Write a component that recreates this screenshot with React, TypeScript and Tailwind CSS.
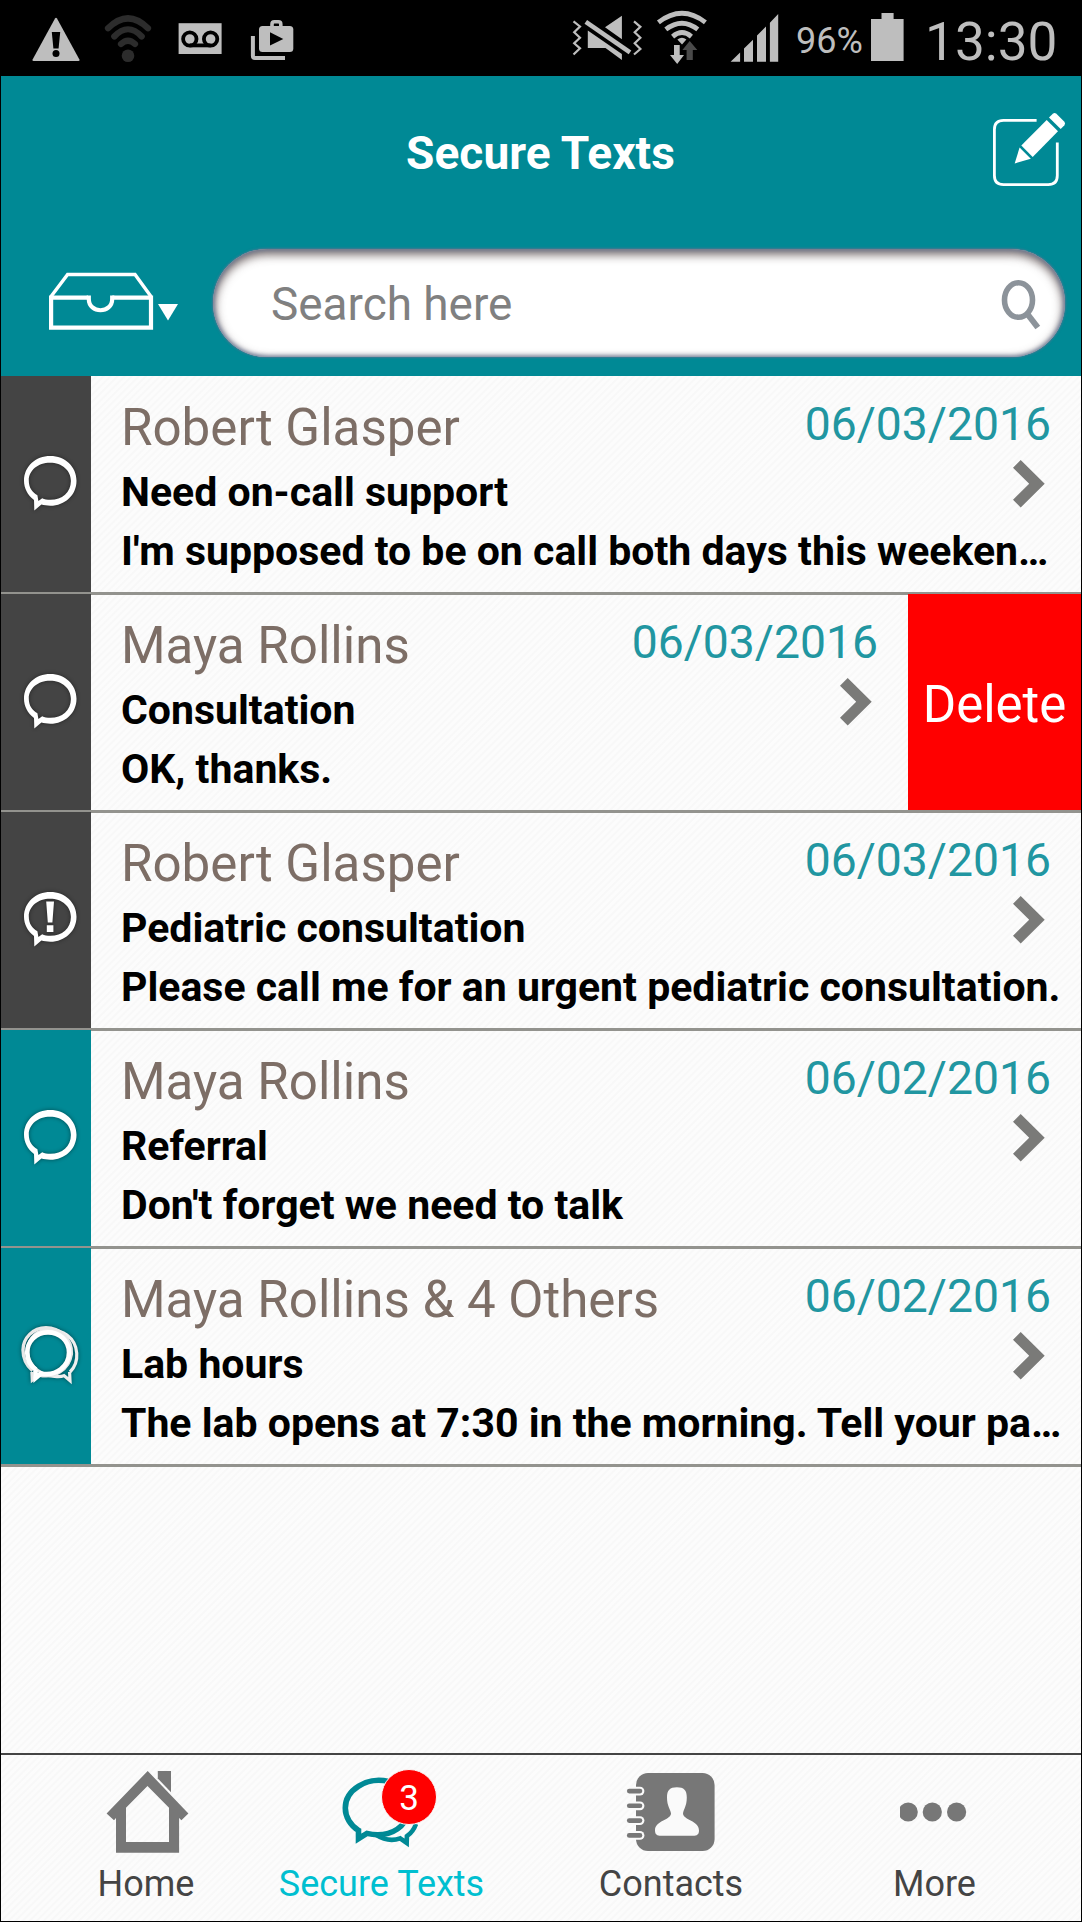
import React from 'react';
import clsx from 'clsx';

type ThreadKind = 'single' | 'urgent' | 'group';

interface Thread {
  id: number;
  name: string;
  date: string;
  subject: string;
  preview: string;
  kind: ThreadKind;
  unread?: boolean;
  swiped?: boolean;
}

const threads: Thread[] = [
  { id: 1, name: 'Robert Glasper', date: '06/03/2016', subject: 'Need on-call support', preview: "I'm supposed to be on call both days this weeken…", kind: 'single' },
  { id: 2, name: 'Maya Rollins', date: '06/03/2016', subject: 'Consultation', preview: 'OK, thanks.', kind: 'single', swiped: true },
  { id: 3, name: 'Robert Glasper', date: '06/03/2016', subject: 'Pediatric consultation', preview: 'Please call me for an urgent pediatric consultation.', kind: 'urgent' },
  { id: 4, name: 'Maya Rollins', date: '06/02/2016', subject: 'Referral', preview: "Don't forget we need to talk", kind: 'single', unread: true },
  { id: 5, name: 'Maya Rollins & 4 Others', date: '06/02/2016', subject: 'Lab hours', preview: 'The lab opens at 7:30 in the morning. Tell your pa…', kind: 'group', unread: true },
];

const StatusBar: React.FC = () => (
  <div className="flex h-[76px] shrink-0 items-start bg-black text-[#bebebe]">
    {/* warning */}
    <svg className="ml-[31px] h-[76px] w-[48px]" viewBox="32 0 48 76">
      <path d="M55 18.6Q56 17 57 18.6L79.4 59.4Q80 61 78.4 61H33.6Q32 61 32.6 59.4Z" fill="#bebebe" />
      <path d="M51.8 32H60.2L58.6 48.6H53.4Z" fill="#000" />
      <circle cx="56" cy="53.4" r="3.5" fill="#000" />
    </svg>
    {/* wifi, no connection */}
    <svg className="ml-[24px] h-[76px] w-[48px]" viewBox="104 0 48 76" fill="none" stroke="#2c2c2c" strokeWidth="6.2" strokeLinecap="round">
      <path d="M108 28.3Q128 8.5 148 28.3" />
      <path d="M114.3 36.5Q128 22 141.7 36.5" />
      <path d="M121 44Q128 37.5 135 44" />
      <circle cx="128" cy="55.8" r="6.3" fill="#2c2c2c" stroke="none" />
    </svg>
    {/* voicemail */}
    <svg className="ml-[26px] h-[76px] w-[44px]" viewBox="178 0 44 76">
      <rect x="178.6" y="23.2" width="43" height="30.8" fill="#bebebe" />
      <g fill="none" stroke="#000" strokeWidth="3.8">
        <circle cx="189.8" cy="39" r="6.7" />
        <circle cx="210.6" cy="39" r="6.7" />
        <path d="M189.8 45.4H210.6" />
      </g>
    </svg>
    {/* play store */}
    <svg className="ml-[28px] h-[76px] w-[44px]" viewBox="250 0 44 76">
      <path d="M252.9 36V56Q252.9 58 255 58H285" fill="none" stroke="#bebebe" strokeWidth="4" />
      <path d="M272 27V24.2Q272 21.8 274.4 21.8H278.4Q280.8 21.8 280.8 24.2V27" fill="none" stroke="#bebebe" strokeWidth="3.6" />
      <rect x="259" y="26" width="34.3" height="26" rx="3.5" fill="#bebebe" />
      <path d="M270 32.3L283.3 38.9L270 45.5Z" fill="#000" />
    </svg>

    {/* vibrate + muted */}
    <svg className="ml-[278px] h-[76px] w-[72px]" viewBox="572 0 72 76">
      <g fill="none" stroke="#bebebe" strokeWidth="2.2">
        <path d="M573.5 21.3L580 26.5L574.2 32.3L580 37.7L574.2 43.3L580 48.3L573.5 54.5" />
        <path d="M634 21.3L640.4 26.8L634.7 32.3L640.4 37.7L634.7 43.3L640.4 49L634 54.5" />
      </g>
      <path d="M585.8 21.8L630 52.4" stroke="#bebebe" strokeWidth="4.6" />
      <path d="M621.9 15.7V39.3L605 27.2ZM587.8 30.6L621.9 54V60L605.5 48H587.8Z" fill="#bebebe" />
    </svg>
    {/* wifi with traffic arrows */}
    <svg className="ml-[12px] h-[76px] w-[52px]" viewBox="656 0 52 76">
      <g fill="none" stroke="#bebebe" strokeWidth="4.8">
        <path d="M658.4 22.4Q682 4.2 705.4 22.4" />
        <path d="M665.8 29.4Q682 17 697.8 29.4" />
        <path d="M672.6 36.6Q682 28.6 691.4 36.6" />
      </g>
      <path d="M677.4 39.5Q682 36 686.4 39.5L682 44.6Z" fill="#bebebe" />
      <path d="M674 45H679.7V55H684L677.2 64L670 55H674Z" fill="#bebebe" />
      <path d="M689.7 41L697.3 50H692.8V60H686.6V50H682.4Z" fill="#4a4a4a" />
    </svg>
    {/* signal strength */}
    <svg className="ml-[22px] h-[76px] w-[50px]" viewBox="730 0 50 76" fill="#bebebe">
      <path d="M730.6 61.8L740.1 52.4V61.8ZM744 61.8V48.6L753 39.8V61.8ZM757 61.8V35.5L766 26.6V61.8ZM769.9 61.8V22.8L778.2 14V61.8Z" />
    </svg>
    <span className="ml-[16px] mt-[20px] w-[68px] text-[36px] leading-[42px]">96%</span>
    {/* battery */}
    <svg className="ml-[6px] h-[76px] w-[34px]" viewBox="870 0 34 76" fill="#bebebe">
      <path d="M881.5 13H893.6V19H903.6V61H871V19H881.5Z" />
    </svg>
    <span className="ml-[21px] mt-[8px] text-[53.2px] leading-[68px] font-normal">13:30</span>
  </div>
);

const ComposeIcon: React.FC = () => (
  <svg className="h-[82px] w-[74px]" viewBox="992 112 74 82" fill="#fff">
    <path d="M1036.6 120.4H1003.5Q994.4 120.4 994.4 129.5V175.5Q994.4 184.6 1003.5 184.6H1048.2Q1057.3 184.6 1057.3 175.5V142.5" fill="none" stroke="#fff" strokeWidth="2.8" />
    <path d="M1014.7 163.4L1019.6 147.6L1030.8 158.8Z" />
    <path d="M1021.3 145.4L1046.7 119.9L1058 131.3L1032.7 157Z" />
    <path d="M1049 117.4L1052.8 113.8Q1054.5 112.4 1056.4 113.8L1064.4 121.8Q1065.8 123.6 1064.4 125.2L1060.7 129Z" />
  </svg>
);

const FolderPicker: React.FC = () => (
  <button className="block">
    <svg className="h-[62px] w-[132px]" viewBox="48 272 132 62" fill="none" stroke="#fff">
      <path d="M51 296.5L67.6 274.5H135L151 296.5" strokeWidth="3.4" />
      <path d="M88 297.6H51.1V327.6H151V297.6H112.3" strokeWidth="4.2" />
      <path d="M88.8 295.5V299C88.8 314 112.2 314 112.2 299V295.5" strokeWidth="4.2" />
      <path d="M158 304H178L168 320.6Z" fill="#fff" stroke="none" />
    </svg>
  </button>
);

const SearchField: React.FC = () => (
  <div className="flex h-[108px] w-[852px] items-center rounded-full bg-white shadow-[0_0_2px_1px_rgba(91,115,145,0.7),inset_0_0_4px_1px_#6b7a98,inset_0_4px_10px_2px_rgba(70,55,55,0.7)]">
    <span className="ml-[58px] mt-px grow text-[45.9px] leading-[60px] text-[#808080]">Search here</span>
    <svg className="mr-[23px] h-[54px] w-[42px]" viewBox="1000 276 42 54" fill="none" stroke="#8c939a">
      <ellipse cx="1018.5" cy="300" rx="14" ry="17.2" strokeWidth="5.6" />
      <path d="M1027 313.5L1037.8 327.5" strokeWidth="6" />
    </svg>
  </div>
);

const BUBBLE =
  'M30.3 4C45 4 56.5 14.5 56.5 28.7C56.5 43 45 53.7 30.3 53.7C27 53.7 24 53.4 21.4 52.6L14.3 58.4L14 48C7.5 43 4 36 4 28.7C4 14.5 15.5 4 30.3 4ZM30 10.8C18 10.8 8.8 18.5 8.8 28.5C8.8 35.5 12 40 17.4 43.2L18.4 49L22.2 46.2C24.5 47.3 27 47.8 30.5 47.8C42 47.8 50.9 40.5 50.9 29C50.9 18.5 42 10.8 30 10.8Z';

const ThreadIcon: React.FC<{ kind: ThreadKind }> = ({ kind }) => (
  <svg className="ml-[19px] mt-[76px] h-[62px] w-[62px] drop-shadow-[0_0_2px_rgba(0,0,0,0.45)]" viewBox="0 0 62 62" fill="#fff">
    {kind === 'group' ? (
      <g fill="none">
        <path d="M50 48C60 38 59 20 47 11C38 5 26 4 17 9C8 15 6 26 9 35C14 47 26 53 38 52.6Q42 52.6 44 51.6L50 56.6L49.6 48" stroke="#efefef" strokeWidth="3.2" />
        <path d="M12 48L12.4 56L19 51C34 54.6 49 46 51.4 30C52.4 14 39 3.8 26 3.8C13 3.8 3 14 3 26C3 35 6.5 41.6 12.6 46.6" stroke="#e8e8e8" strokeWidth="3.4" />
        <path d="M15.5 46L15.6 54L21 49.4C36 52.6 49 42.4 49 28.6C49 16 39 8.4 28 8.4C16 8.4 7.2 17.5 7.2 28.5C7.2 36 10.5 42 16 45.6" stroke="#fff" strokeWidth="4.6" />
      </g>
    ) : (
      <path d={BUBBLE} fillRule="evenodd" />
    )}
    {kind === 'urgent' && <path d="M26.2 13.4H34L32.4 34.6H27.8ZM26.8 37.2H33.4V44H26.8Z" />}
  </svg>
);

const ThreadRow: React.FC<{ thread: Thread; first: boolean; last: boolean }> = ({ thread, first, last }) => (
  <div className={clsx('flex border-[#93938e]', last ? 'h-[219px] border-b-[3px]' : 'h-[218px] border-b-2')}>
    <div className={clsx('w-[90px] shrink-0', thread.unread ? 'bg-[#008995]' : 'bg-[#444444]')}>
      <ThreadIcon kind={thread.kind} />
    </div>
    <div className={clsx('min-w-0 grow border-t pl-[30px] pt-[18px] whitespace-nowrap', first ? 'border-transparent' : 'border-[#93938e]')}>
      <div className="flex h-[65px] items-start justify-between pr-[30px]">
        <span className="text-[51.1px] leading-[65px] text-[#7d6e66]">{thread.name}</span>
        <span className="-mt-px text-[46.3px] leading-[60px] text-[#2196a1]">{thread.date}</span>
      </div>
      <div className="mt-[3px] flex h-[59px] items-start justify-between pr-[36px]">
        <span className="text-[41px] leading-[59px] font-bold text-black">{thread.subject}</span>
        <svg className="-mt-[3px] h-[48px] w-[32px]" viewBox="0 0 32 48" fill="#7a7a78">
          <path d="M7.7 0L31.7 23.8L7.7 47.5L0 39.8L16.2 23.8L0 7.7Z" />
        </svg>
      </div>
      <p className="text-[41px] leading-[59px] font-bold text-black">{thread.preview}</p>
    </div>
    {thread.swiped && (
      <button className="w-[173px] shrink-0 bg-[#ff0000] pt-[6px] text-[51px] leading-[60px] text-white">Delete</button>
    )}
  </div>
);

const HomeIcon: React.FC = () => (
  <svg className="h-[100px] w-[90px]" viewBox="101 1762 90 100" fill="#777777">
    <path fillRule="evenodd" d="M147.7 1771L188.4 1813.4L181.4 1820.2L179.1 1818V1852.8H116V1818L114 1820.2L106.6 1813.4ZM147.5 1786L126 1807.8V1842H169V1807.8Z" />
    <path d="M157.8 1771H171V1792.3L157.8 1778.6Z" />
  </svg>
);

const TextsIcon: React.FC = () => (
  <div className="relative">
    <svg className="h-[100px] w-[120px]" viewBox="321.5 1762 120 100" fill="none" stroke="#008995">
      <path d="M388 1781.4C366 1776.5 344.8 1790 344.8 1808C344.8 1817 350 1825.6 358 1830.4V1838.6L366.4 1833.4C381 1837 396 1833.4 404 1822" strokeWidth="5.6" />
      <path d="M415.5 1824C413.5 1829.6 410.4 1833.4 406.4 1836.2L406.2 1843L399.6 1838.4C391 1841.4 383 1839.6 375 1834.6" strokeWidth="4.6" />
    </svg>
    <span className="absolute left-[59.5px] top-[7px] h-[56px] w-[56px] rounded-full border border-[#fafafa] bg-[#ff0000] pt-[8px] text-center text-[35px] leading-[42px] text-white">
      3
    </span>
  </div>
);

const ContactsIcon: React.FC = () => (
  <svg className="h-[100px] w-[100px]" viewBox="621 1762 100 100" fill="#777777">
    <rect x="636" y="1773" width="78.6" height="78" rx="12" />
    {[1791.1, 1805.8, 1820.6, 1835.4].map((y) => (
      <g key={y} strokeLinecap="round">
        <path d={`M629 ${y}H640`} stroke="#fafafa" strokeWidth="8.8" />
        <path d={`M629.2 ${y}H640`} stroke="#777777" strokeWidth="4.6" />
      </g>
    ))}
    <path
      d="M676.9 1787.3C684 1787.3 686.8 1790.4 686.8 1797.4C686.8 1806.4 683.4 1809 683 1813.6C683.4 1820.4 699 1820.6 699 1830.4C699 1834.2 697 1835.8 693 1835.8H661C657 1835.8 655 1834.2 655 1830.4C655 1820.6 670.6 1820.4 671 1813.6C670.6 1809 667 1806.4 667 1797.4C667 1790.4 669.8 1787.3 676.9 1787.3Z"
      fill="#fafafa"
    />
  </svg>
);

const MoreIcon: React.FC = () => (
  <svg className="h-[100px] w-[70px]" viewBox="900 1762 70 100" fill="#777777">
    <circle cx="908.2" cy="1812" r="9.6" />
    <circle cx="932.3" cy="1812" r="9.6" />
    <circle cx="956.6" cy="1812" r="9.6" />
  </svg>
);

const tabs = [
  { label: 'Home', icon: <HomeIcon />, width: 'w-[290px]' },
  { label: 'Secure Texts', icon: <TextsIcon />, width: 'w-[181px]', active: true },
  { label: 'Contacts', icon: <ContactsIcon />, width: 'w-[398px]' },
  { label: 'More', icon: <MoreIcon />, width: 'w-[129px]' },
];

const App: React.FC = () => {
  return (
    <div className="flex h-[1922px] w-[1082px] flex-col overflow-hidden border-x border-b border-black bg-[#fafafa] bg-[repeating-linear-gradient(135deg,#fcfcfc_0px,#fcfcfc_2px,#f8f8f8_3px,#f8f8f8_4px,#fcfcfc_5px)] font-['Roboto',sans-serif]">
      <StatusBar />

      <header className="h-[300px] shrink-0 bg-[#008995]">
        <div className="flex h-[154px] items-center justify-between pl-[88px] pr-[15px]">
          <h1 className="grow text-center text-[46.1px] leading-[60px] font-bold text-white">Secure Texts</h1>
          <ComposeIcon />
        </div>
        <div className="flex h-[146px] items-center justify-between pl-[47px] pr-[16px]">
          <FolderPicker />
          <SearchField />
        </div>
      </header>

      <main className="grow">
        {threads.map((thread, i) => (
          <ThreadRow key={thread.id} thread={thread} first={i === 0} last={i === threads.length - 1} />
        ))}
      </main>

      <nav className="flex h-[168px] shrink-0 border-t-2 border-[#444444] pt-[7px]">
        {tabs.map((tab) => (
          <button key={tab.label} className={clsx('flex flex-col items-center', tab.width)}>
            {tab.icon}
            <span className={clsx('text-[36px] leading-[44px] whitespace-nowrap', tab.active ? 'text-[#00bfd0]' : 'text-[#444444]')}>{tab.label}</span>
          </button>
        ))}
      </nav>
    </div>
  );
};

export default App;
